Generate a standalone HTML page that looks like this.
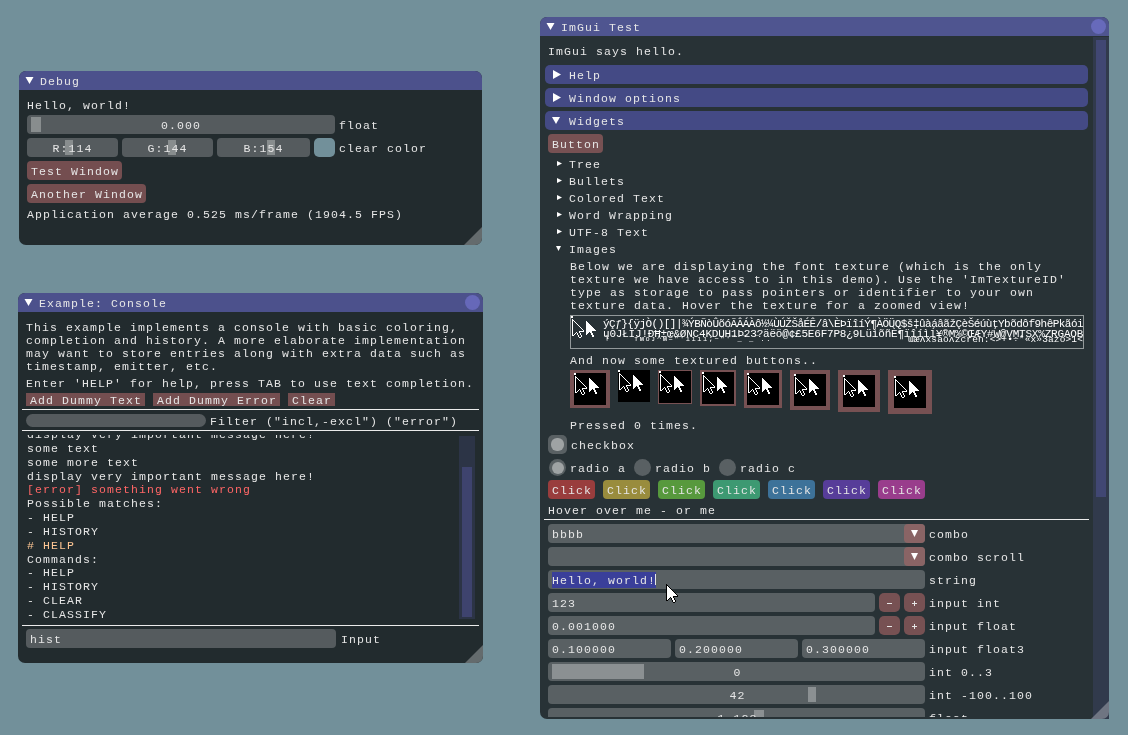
<!DOCTYPE html>
<html><head><meta charset="utf-8"><style>
html,body{margin:0;padding:0;width:1128px;height:735px;overflow:hidden;background:rgb(114,144,154)}
body div, body svg{position:absolute}
.t{font-family:"Liberation Mono",monospace;font-size:11.5px;letter-spacing:1.1px;line-height:13px;white-space:pre}
</style></head><body>
<div style="left:0;top:0;width:1128px;height:735px;will-change:transform">
<div style="left:19px;top:71px;width:463px;height:174px;background:rgb(34,43,46);border-radius:7px;overflow:hidden">
<div style="left:0;top:0;width:100%;height:19px;background:rgb(76,81,140)"></div>
</div>
<svg style="left:0;top:0" width="1128" height="735"><polygon points="25.5,77 33.5,77 29.5,84" fill="rgb(255,255,255)"/></svg>
<div class="t" style="left:40px;top:75px;color:rgb(230,230,230);">Debug</div>
<div class="t" style="left:27px;top:99px;color:rgb(230,230,230);">Hello, world!</div>
<div style="left:27px;top:115px;width:308px;height:19px;background:rgb(85,91,94);border-radius:4px;"></div>
<div style="left:31px;top:117px;width:10px;height:15px;background:rgb(136,141,142);"></div>
<div class="t" style="left:161px;top:119px;color:rgb(230,230,230);">0.000</div>
<div class="t" style="left:339px;top:119px;color:rgb(230,230,230);">float</div>
<div style="left:27px;top:138px;width:91px;height:19px;background:rgb(85,91,94);border-radius:4px;"></div>
<div style="left:65px;top:140px;width:8px;height:15px;background:rgb(136,141,142);"></div>
<div class="t" style="left:52.5px;top:142px;color:rgb(230,230,230);">R:114</div>
<div style="left:122px;top:138px;width:91px;height:19px;background:rgb(85,91,94);border-radius:4px;"></div>
<div style="left:168px;top:140px;width:8px;height:15px;background:rgb(136,141,142);"></div>
<div class="t" style="left:147.5px;top:142px;color:rgb(230,230,230);">G:144</div>
<div style="left:217px;top:138px;width:93px;height:19px;background:rgb(85,91,94);border-radius:4px;"></div>
<div style="left:267px;top:140px;width:8px;height:15px;background:rgb(136,141,142);"></div>
<div class="t" style="left:243.5px;top:142px;color:rgb(230,230,230);">B:154</div>
<div style="left:314px;top:138px;width:21px;height:19px;background:rgb(114,144,154);border-radius:5px;"></div>
<div class="t" style="left:339px;top:142px;color:rgb(230,230,230);">clear color</div>
<div style="left:27px;top:161px;width:95px;height:19px;background:rgb(116,78,80);border-radius:4px;"></div>
<div class="t" style="left:31px;top:165px;color:rgb(230,230,230);">Test Window</div>
<div style="left:27px;top:184px;width:119px;height:19px;background:rgb(116,78,80);border-radius:4px;"></div>
<div class="t" style="left:31px;top:188px;color:rgb(230,230,230);">Another Window</div>
<div class="t" style="left:27px;top:208px;color:rgb(230,230,230);">Application average 0.525 ms/frame (1904.5 FPS)</div>
<svg style="left:0;top:0" width="1128" height="735"><path d="M482 227L482 238A7 7 0 0 1 475 245L464 245Z" fill="rgb(100,107,109)"/></svg>
<div style="left:18px;top:293px;width:465px;height:370px;background:rgb(34,43,46);border-radius:7px;overflow:hidden">
<div style="left:0;top:0;width:100%;height:19px;background:rgb(76,81,140)"></div>
</div>
<svg style="left:0;top:0" width="1128" height="735"><polygon points="24.5,299 32.5,299 28.5,306" fill="rgb(255,255,255)"/></svg>
<div class="t" style="left:39px;top:297px;color:rgb(230,230,230);">Example: Console</div>
<div style="left:464.9px;top:294.9px;width:15.2px;height:15.2px;border-radius:50%;background:rgb(102,104,185)"></div>
<div class="t" style="left:26px;top:321px;color:rgb(230,230,230);">This example implements a console with basic coloring,</div>
<div class="t" style="left:26px;top:334px;color:rgb(230,230,230);">completion and history. A more elaborate implementation</div>
<div class="t" style="left:26px;top:347px;color:rgb(230,230,230);">may want to store entries along with extra data such as</div>
<div class="t" style="left:26px;top:360px;color:rgb(230,230,230);">timestamp, emitter, etc.</div>
<div class="t" style="left:26px;top:377px;color:rgb(230,230,230);">Enter &#x27;HELP&#x27; for help, press TAB to use text completion.</div>
<div style="left:26px;top:393px;width:119px;height:13px;background:rgb(116,78,80);"></div>
<div class="t" style="left:30px;top:394px;color:rgb(230,230,230);">Add Dummy Text</div>
<div style="left:153px;top:393px;width:127px;height:13px;background:rgb(116,78,80);"></div>
<div class="t" style="left:157px;top:394px;color:rgb(230,230,230);">Add Dummy Error</div>
<div style="left:288px;top:393px;width:47px;height:13px;background:rgb(116,78,80);"></div>
<div class="t" style="left:292px;top:394px;color:rgb(230,230,230);">Clear</div>
<div style="left:22px;top:409px;width:457px;height:1px;background:rgb(235,235,235);"></div>
<div style="left:26px;top:414px;width:180px;height:13px;background:rgb(85,91,94);border-radius:6.5px;"></div>
<div class="t" style="left:210px;top:415px;color:rgb(230,230,230);">Filter (&quot;incl,-excl&quot;) (&quot;error&quot;)</div>
<div style="left:22px;top:430px;width:457px;height:1px;background:rgb(235,235,235);"></div>
<div style="left:26px;top:435px;width:430px;height:186px;overflow:hidden">
<div class="t" style="left:1px;top:-6.83px;color:rgb(230,230,230)">display very important message here!</div>
<div class="t" style="left:1px;top:7px;color:rgb(230,230,230)">some text</div>
<div class="t" style="left:1px;top:20.83px;color:rgb(230,230,230)">some more text</div>
<div class="t" style="left:1px;top:34.66px;color:rgb(230,230,230)">display very important message here!</div>
<div class="t" style="left:1px;top:48.49px;color:rgb(255,102,102)">[error] something went wrong</div>
<div class="t" style="left:1px;top:62.32px;color:rgb(230,230,230)">Possible matches:</div>
<div class="t" style="left:1px;top:76.15px;color:rgb(230,230,230)">- HELP</div>
<div class="t" style="left:1px;top:89.98px;color:rgb(230,230,230)">- HISTORY</div>
<div class="t" style="left:1px;top:103.81px;color:rgb(255,199,148)"># HELP</div>
<div class="t" style="left:1px;top:117.64px;color:rgb(230,230,230)">Commands:</div>
<div class="t" style="left:1px;top:131.47px;color:rgb(230,230,230)">- HELP</div>
<div class="t" style="left:1px;top:145.3px;color:rgb(230,230,230)">- HISTORY</div>
<div class="t" style="left:1px;top:159.13px;color:rgb(230,230,230)">- CLEAR</div>
<div class="t" style="left:1px;top:172.96px;color:rgb(230,230,230)">- CLASSIFY</div>
</div>
<div style="left:459px;top:436px;width:16px;height:183px;background:rgb(44,52,70);"></div>
<div style="left:462px;top:467px;width:10px;height:150px;background:rgb(62,67,110);"></div>
<div style="left:22px;top:625px;width:457px;height:1px;background:rgb(235,235,235);"></div>
<div style="left:26px;top:629px;width:310px;height:19px;background:rgb(85,91,94);border-radius:4px;"></div>
<div class="t" style="left:30px;top:633px;color:rgb(230,230,230);">hist</div>
<div class="t" style="left:341px;top:633px;color:rgb(230,230,230);">Input</div>
<svg style="left:0;top:0" width="1128" height="735"><path d="M483 645L483 656A7 7 0 0 1 476 663L465 663Z" fill="rgb(100,107,109)"/></svg>
<div style="left:540px;top:17px;width:569px;height:702px;background:rgb(40,50,54);border-radius:7px;overflow:hidden">
<div style="left:0;top:0;width:100%;height:19px;background:rgb(79,85,144)"></div>
</div>
<svg style="left:0;top:0" width="1128" height="735"><polygon points="546.5,23 554.5,23 550.5,30" fill="rgb(255,255,255)"/></svg>
<div class="t" style="left:561px;top:21px;color:rgb(230,230,230);">ImGui Test</div>
<div style="left:1090.9px;top:18.9px;width:15.2px;height:15.2px;border-radius:50%;background:rgb(103,106,187)"></div>
<div style="left:1093px;top:37px;width:16px;height:682px;background:rgb(49,58,76);"></div>
<div style="left:1096px;top:40px;width:10px;height:457px;background:rgb(65,71,115);"></div>
<div style="left:540px;top:36px;width:553px;height:681px;overflow:hidden">
<div class="t" style="left:8px;top:9px;color:rgb(230,230,230);">ImGui says hello.</div>
<div style="left:5px;top:29px;width:543px;height:19px;background:rgb(68,74,133);border-radius:5px;"></div>
<div class="t" style="left:29px;top:33px;color:rgb(230,230,230);">Help</div>
<svg style="left:0;top:0" width="1128" height="735"><polygon points="13,34 13,43 21,38.5" fill="rgb(255,255,255)"/></svg>
<div style="left:5px;top:52px;width:543px;height:19px;background:rgb(68,74,133);border-radius:5px;"></div>
<div class="t" style="left:29px;top:56px;color:rgb(230,230,230);">Window options</div>
<svg style="left:0;top:0" width="1128" height="735"><polygon points="13,57 13,66 21,61.5" fill="rgb(255,255,255)"/></svg>
<div style="left:5px;top:75px;width:543px;height:19px;background:rgb(68,74,133);border-radius:5px;"></div>
<div class="t" style="left:29px;top:79px;color:rgb(230,230,230);">Widgets</div>
<svg style="left:0;top:0" width="1128" height="735"><polygon points="12,81 20,81 16,88" fill="rgb(255,255,255)"/></svg>
<div style="left:8px;top:98px;width:55px;height:19px;background:rgb(119,81,83);border-radius:4px;"></div>
<div class="t" style="left:12px;top:102px;color:rgb(230,230,230);">Button</div>
<div class="t" style="left:29px;top:122px;color:rgb(230,230,230);">Tree</div>
<svg style="left:0;top:0" width="1128" height="735"><polygon points="17,125 17,130 22,127.5" fill="rgb(255,255,255)"/></svg>
<div class="t" style="left:29px;top:139px;color:rgb(230,230,230);">Bullets</div>
<svg style="left:0;top:0" width="1128" height="735"><polygon points="17,142 17,147 22,144.5" fill="rgb(255,255,255)"/></svg>
<div class="t" style="left:29px;top:156px;color:rgb(230,230,230);">Colored Text</div>
<svg style="left:0;top:0" width="1128" height="735"><polygon points="17,159 17,164 22,161.5" fill="rgb(255,255,255)"/></svg>
<div class="t" style="left:29px;top:173px;color:rgb(230,230,230);">Word Wrapping</div>
<svg style="left:0;top:0" width="1128" height="735"><polygon points="17,176 17,181 22,178.5" fill="rgb(255,255,255)"/></svg>
<div class="t" style="left:29px;top:190px;color:rgb(230,230,230);">UTF-8 Text</div>
<svg style="left:0;top:0" width="1128" height="735"><polygon points="17,193 17,198 22,195.5" fill="rgb(255,255,255)"/></svg>
<div class="t" style="left:29px;top:207px;color:rgb(230,230,230);">Images</div>
<svg style="left:0;top:0" width="1128" height="735"><polygon points="16,210 21,210 18.5,215" fill="rgb(255,255,255)"/></svg>
<div class="t" style="left:30px;top:224px;color:rgb(230,230,230);">Below we are displaying the font texture (which is the only</div>
<div class="t" style="left:30px;top:237px;color:rgb(230,230,230);">texture we have access to in this demo). Use the &#x27;ImTextureID&#x27;</div>
<div class="t" style="left:30px;top:250px;color:rgb(230,230,230);">type as storage to pass pointers or identifier to your own</div>
<div class="t" style="left:30px;top:263px;color:rgb(230,230,230);">texture data. Hover the texture for a zoomed view!</div>
<div style="left:30px;top:279px;width:514px;height:34px;background:rgb(147,153,154);"></div>
<div style="left:31px;top:280px;width:512px;height:32px;background:rgb(40,50,54);"></div>
</div>
<svg style="left:0;top:0" width="1128" height="735" shape-rendering="crispEdges"><path d="M571 316h2v2h-2zM572 319h1v1h-1zM572 320h2v1h-2zM572 321h1v1h-1zM574 321h1v1h-1zM572 322h1v1h-1zM575 322h1v1h-1zM572 323h1v1h-1zM576 323h1v1h-1zM572 324h1v1h-1zM577 324h1v1h-1zM572 325h1v1h-1zM578 325h1v1h-1zM572 326h1v1h-1zM579 326h1v1h-1zM572 327h1v1h-1zM580 327h1v1h-1zM572 328h1v1h-1zM581 328h1v1h-1zM572 329h1v1h-1zM582 329h1v1h-1zM572 330h1v1h-1zM583 330h1v1h-1zM572 331h1v1h-1zM579 331h5v1h-5zM572 332h1v1h-1zM576 332h1v1h-1zM579 332h1v1h-1zM572 333h1v1h-1zM575 333h1v1h-1zM577 333h1v1h-1zM580 333h1v1h-1zM572 334h1v1h-1zM574 334h1v1h-1zM577 334h1v1h-1zM580 334h1v1h-1zM572 335h2v1h-2zM578 335h1v1h-1zM581 335h1v1h-1zM578 336h1v1h-1zM581 336h1v1h-1zM579 337h2v1h-2zM586 321h1v1h-1zM586 322h2v1h-2zM586 323h3v1h-3zM586 324h4v1h-4zM586 325h5v1h-5zM586 326h6v1h-6zM586 327h7v1h-7zM586 328h8v1h-8zM586 329h9v1h-9zM586 330h10v1h-10zM586 331h6v1h-6zM586 332h3v1h-3zM590 332h2v1h-2zM586 333h2v1h-2zM591 333h2v1h-2zM586 334h1v1h-1zM591 334h2v1h-2zM592 335h2v1h-2zM592 336h2v1h-2z" fill="#fff"/></svg>
<div style="left:603px;top:319px;font-family:'Liberation Mono',monospace;font-size:11px;letter-spacing:-0.524px;line-height:10px;white-space:pre;color:#fff">ýÇƒ}{ÿjÒ()[]|¾ÝBÑòÛõóÃÂÁÀô½¼ÙÚŽŠåÉÊ/â\ÈÞïîíÝ¶ÀÖÜQ$š‡ûàáâãžÇèŠéúùţYbõdôf9hêPkãói</div>
<div style="left:603px;top:329px;font-family:'Liberation Mono',monospace;font-size:11px;letter-spacing:-0.200px;line-height:10px;white-space:pre;color:#fff">ų0JŁIJ!ÐĦ±œ&amp;ØNC4KDUH1Þ23?äëö@¢£5E6F7P8¿9LüìõñÈ¶ïîíìĺ¥®M%©ŒÆY#W@VMTSX%ZRGAOB</div>
<div style="left:908px;top:335px;font-family:'Liberation Mono',monospace;font-size:9.5px;letter-spacing:0.133px;line-height:10px;white-space:pre;color:#fff">ɯæʌxsaoʌzcren:&lt;&gt;+•÷*«x»3azo&gt;1&lt;</div>
<div style="left:634px;top:334px;font-family:'Liberation Mono',monospace;font-size:7px;letter-spacing:1.550px;line-height:10px;white-space:pre;color:#fff">ᴛᴍᴏᴊ^ᴍ=&quot;&#x27;ıııı;~&quot;&#x27;‾_‾_‾..</div>
<div style="left:604px;top:334px;font-family:'Liberation Mono',monospace;font-size:8px;letter-spacing:3.200px;line-height:10px;white-space:pre;color:#fff">˥</div>
<div style="left:540px;top:36px;width:553px;height:681px;overflow:hidden">
<div class="t" style="left:30px;top:318px;color:rgb(230,230,230);">And now some textured buttons..</div>
<div style="left:30px;top:334px;width:40px;height:38px;background:rgb(119,81,83);"></div>
<div style="left:34px;top:337px;width:32px;height:32px;background:rgb(0,0,0);"></div>
<div style="left:78px;top:334px;width:32px;height:32px;background:rgb(0,0,0);"></div>
<div style="left:118px;top:334px;width:34px;height:34px;background:rgb(119,81,83);"></div>
<div style="left:119px;top:335px;width:32px;height:32px;background:rgb(0,0,0);"></div>
<div style="left:160px;top:334px;width:36px;height:36px;background:rgb(119,81,83);"></div>
<div style="left:162px;top:336px;width:32px;height:32px;background:rgb(0,0,0);"></div>
<div style="left:204px;top:334px;width:38px;height:38px;background:rgb(119,81,83);"></div>
<div style="left:207px;top:337px;width:32px;height:32px;background:rgb(0,0,0);"></div>
<div style="left:250px;top:334px;width:40px;height:40px;background:rgb(119,81,83);"></div>
<div style="left:254px;top:338px;width:32px;height:32px;background:rgb(0,0,0);"></div>
<div style="left:298px;top:334px;width:42px;height:42px;background:rgb(119,81,83);"></div>
<div style="left:303px;top:339px;width:32px;height:32px;background:rgb(0,0,0);"></div>
<div style="left:348px;top:334px;width:44px;height:44px;background:rgb(119,81,83);"></div>
<div style="left:354px;top:340px;width:32px;height:32px;background:rgb(0,0,0);"></div>
</div>
<svg style="left:0;top:0" width="1128" height="735" shape-rendering="crispEdges"><path d="M574 373h2v2h-2zM575 376h1v1h-1zM575 377h2v1h-2zM575 378h1v1h-1zM577 378h1v1h-1zM575 379h1v1h-1zM578 379h1v1h-1zM575 380h1v1h-1zM579 380h1v1h-1zM575 381h1v1h-1zM580 381h1v1h-1zM575 382h1v1h-1zM581 382h1v1h-1zM575 383h1v1h-1zM582 383h1v1h-1zM575 384h1v1h-1zM583 384h1v1h-1zM575 385h1v1h-1zM584 385h1v1h-1zM575 386h1v1h-1zM585 386h1v1h-1zM575 387h1v1h-1zM586 387h1v1h-1zM575 388h1v1h-1zM582 388h5v1h-5zM575 389h1v1h-1zM579 389h1v1h-1zM582 389h1v1h-1zM575 390h1v1h-1zM578 390h1v1h-1zM580 390h1v1h-1zM583 390h1v1h-1zM575 391h1v1h-1zM577 391h1v1h-1zM580 391h1v1h-1zM583 391h1v1h-1zM575 392h2v1h-2zM581 392h1v1h-1zM584 392h1v1h-1zM581 393h1v1h-1zM584 393h1v1h-1zM582 394h2v1h-2zM589 378h1v1h-1zM589 379h2v1h-2zM589 380h3v1h-3zM589 381h4v1h-4zM589 382h5v1h-5zM589 383h6v1h-6zM589 384h7v1h-7zM589 385h8v1h-8zM589 386h9v1h-9zM589 387h10v1h-10zM589 388h6v1h-6zM589 389h3v1h-3zM593 389h2v1h-2zM589 390h2v1h-2zM594 390h2v1h-2zM589 391h1v1h-1zM594 391h2v1h-2zM595 392h2v1h-2zM595 393h2v1h-2z" fill="#fff"/></svg>
<svg style="left:0;top:0" width="1128" height="735" shape-rendering="crispEdges"><path d="M618 370h2v2h-2zM619 373h1v1h-1zM619 374h2v1h-2zM619 375h1v1h-1zM621 375h1v1h-1zM619 376h1v1h-1zM622 376h1v1h-1zM619 377h1v1h-1zM623 377h1v1h-1zM619 378h1v1h-1zM624 378h1v1h-1zM619 379h1v1h-1zM625 379h1v1h-1zM619 380h1v1h-1zM626 380h1v1h-1zM619 381h1v1h-1zM627 381h1v1h-1zM619 382h1v1h-1zM628 382h1v1h-1zM619 383h1v1h-1zM629 383h1v1h-1zM619 384h1v1h-1zM630 384h1v1h-1zM619 385h1v1h-1zM626 385h5v1h-5zM619 386h1v1h-1zM623 386h1v1h-1zM626 386h1v1h-1zM619 387h1v1h-1zM622 387h1v1h-1zM624 387h1v1h-1zM627 387h1v1h-1zM619 388h1v1h-1zM621 388h1v1h-1zM624 388h1v1h-1zM627 388h1v1h-1zM619 389h2v1h-2zM625 389h1v1h-1zM628 389h1v1h-1zM625 390h1v1h-1zM628 390h1v1h-1zM626 391h2v1h-2zM633 375h1v1h-1zM633 376h2v1h-2zM633 377h3v1h-3zM633 378h4v1h-4zM633 379h5v1h-5zM633 380h6v1h-6zM633 381h7v1h-7zM633 382h8v1h-8zM633 383h9v1h-9zM633 384h10v1h-10zM633 385h6v1h-6zM633 386h3v1h-3zM637 386h2v1h-2zM633 387h2v1h-2zM638 387h2v1h-2zM633 388h1v1h-1zM638 388h2v1h-2zM639 389h2v1h-2zM639 390h2v1h-2z" fill="#fff"/></svg>
<svg style="left:0;top:0" width="1128" height="735" shape-rendering="crispEdges"><path d="M659 371h2v2h-2zM660 374h1v1h-1zM660 375h2v1h-2zM660 376h1v1h-1zM662 376h1v1h-1zM660 377h1v1h-1zM663 377h1v1h-1zM660 378h1v1h-1zM664 378h1v1h-1zM660 379h1v1h-1zM665 379h1v1h-1zM660 380h1v1h-1zM666 380h1v1h-1zM660 381h1v1h-1zM667 381h1v1h-1zM660 382h1v1h-1zM668 382h1v1h-1zM660 383h1v1h-1zM669 383h1v1h-1zM660 384h1v1h-1zM670 384h1v1h-1zM660 385h1v1h-1zM671 385h1v1h-1zM660 386h1v1h-1zM667 386h5v1h-5zM660 387h1v1h-1zM664 387h1v1h-1zM667 387h1v1h-1zM660 388h1v1h-1zM663 388h1v1h-1zM665 388h1v1h-1zM668 388h1v1h-1zM660 389h1v1h-1zM662 389h1v1h-1zM665 389h1v1h-1zM668 389h1v1h-1zM660 390h2v1h-2zM666 390h1v1h-1zM669 390h1v1h-1zM666 391h1v1h-1zM669 391h1v1h-1zM667 392h2v1h-2zM674 376h1v1h-1zM674 377h2v1h-2zM674 378h3v1h-3zM674 379h4v1h-4zM674 380h5v1h-5zM674 381h6v1h-6zM674 382h7v1h-7zM674 383h8v1h-8zM674 384h9v1h-9zM674 385h10v1h-10zM674 386h6v1h-6zM674 387h3v1h-3zM678 387h2v1h-2zM674 388h2v1h-2zM679 388h2v1h-2zM674 389h1v1h-1zM679 389h2v1h-2zM680 390h2v1h-2zM680 391h2v1h-2z" fill="#fff"/></svg>
<svg style="left:0;top:0" width="1128" height="735" shape-rendering="crispEdges"><path d="M702 372h2v2h-2zM703 375h1v1h-1zM703 376h2v1h-2zM703 377h1v1h-1zM705 377h1v1h-1zM703 378h1v1h-1zM706 378h1v1h-1zM703 379h1v1h-1zM707 379h1v1h-1zM703 380h1v1h-1zM708 380h1v1h-1zM703 381h1v1h-1zM709 381h1v1h-1zM703 382h1v1h-1zM710 382h1v1h-1zM703 383h1v1h-1zM711 383h1v1h-1zM703 384h1v1h-1zM712 384h1v1h-1zM703 385h1v1h-1zM713 385h1v1h-1zM703 386h1v1h-1zM714 386h1v1h-1zM703 387h1v1h-1zM710 387h5v1h-5zM703 388h1v1h-1zM707 388h1v1h-1zM710 388h1v1h-1zM703 389h1v1h-1zM706 389h1v1h-1zM708 389h1v1h-1zM711 389h1v1h-1zM703 390h1v1h-1zM705 390h1v1h-1zM708 390h1v1h-1zM711 390h1v1h-1zM703 391h2v1h-2zM709 391h1v1h-1zM712 391h1v1h-1zM709 392h1v1h-1zM712 392h1v1h-1zM710 393h2v1h-2zM717 377h1v1h-1zM717 378h2v1h-2zM717 379h3v1h-3zM717 380h4v1h-4zM717 381h5v1h-5zM717 382h6v1h-6zM717 383h7v1h-7zM717 384h8v1h-8zM717 385h9v1h-9zM717 386h10v1h-10zM717 387h6v1h-6zM717 388h3v1h-3zM721 388h2v1h-2zM717 389h2v1h-2zM722 389h2v1h-2zM717 390h1v1h-1zM722 390h2v1h-2zM723 391h2v1h-2zM723 392h2v1h-2z" fill="#fff"/></svg>
<svg style="left:0;top:0" width="1128" height="735" shape-rendering="crispEdges"><path d="M747 373h2v2h-2zM748 376h1v1h-1zM748 377h2v1h-2zM748 378h1v1h-1zM750 378h1v1h-1zM748 379h1v1h-1zM751 379h1v1h-1zM748 380h1v1h-1zM752 380h1v1h-1zM748 381h1v1h-1zM753 381h1v1h-1zM748 382h1v1h-1zM754 382h1v1h-1zM748 383h1v1h-1zM755 383h1v1h-1zM748 384h1v1h-1zM756 384h1v1h-1zM748 385h1v1h-1zM757 385h1v1h-1zM748 386h1v1h-1zM758 386h1v1h-1zM748 387h1v1h-1zM759 387h1v1h-1zM748 388h1v1h-1zM755 388h5v1h-5zM748 389h1v1h-1zM752 389h1v1h-1zM755 389h1v1h-1zM748 390h1v1h-1zM751 390h1v1h-1zM753 390h1v1h-1zM756 390h1v1h-1zM748 391h1v1h-1zM750 391h1v1h-1zM753 391h1v1h-1zM756 391h1v1h-1zM748 392h2v1h-2zM754 392h1v1h-1zM757 392h1v1h-1zM754 393h1v1h-1zM757 393h1v1h-1zM755 394h2v1h-2zM762 378h1v1h-1zM762 379h2v1h-2zM762 380h3v1h-3zM762 381h4v1h-4zM762 382h5v1h-5zM762 383h6v1h-6zM762 384h7v1h-7zM762 385h8v1h-8zM762 386h9v1h-9zM762 387h10v1h-10zM762 388h6v1h-6zM762 389h3v1h-3zM766 389h2v1h-2zM762 390h2v1h-2zM767 390h2v1h-2zM762 391h1v1h-1zM767 391h2v1h-2zM768 392h2v1h-2zM768 393h2v1h-2z" fill="#fff"/></svg>
<svg style="left:0;top:0" width="1128" height="735" shape-rendering="crispEdges"><path d="M794 374h2v2h-2zM795 377h1v1h-1zM795 378h2v1h-2zM795 379h1v1h-1zM797 379h1v1h-1zM795 380h1v1h-1zM798 380h1v1h-1zM795 381h1v1h-1zM799 381h1v1h-1zM795 382h1v1h-1zM800 382h1v1h-1zM795 383h1v1h-1zM801 383h1v1h-1zM795 384h1v1h-1zM802 384h1v1h-1zM795 385h1v1h-1zM803 385h1v1h-1zM795 386h1v1h-1zM804 386h1v1h-1zM795 387h1v1h-1zM805 387h1v1h-1zM795 388h1v1h-1zM806 388h1v1h-1zM795 389h1v1h-1zM802 389h5v1h-5zM795 390h1v1h-1zM799 390h1v1h-1zM802 390h1v1h-1zM795 391h1v1h-1zM798 391h1v1h-1zM800 391h1v1h-1zM803 391h1v1h-1zM795 392h1v1h-1zM797 392h1v1h-1zM800 392h1v1h-1zM803 392h1v1h-1zM795 393h2v1h-2zM801 393h1v1h-1zM804 393h1v1h-1zM801 394h1v1h-1zM804 394h1v1h-1zM802 395h2v1h-2zM809 379h1v1h-1zM809 380h2v1h-2zM809 381h3v1h-3zM809 382h4v1h-4zM809 383h5v1h-5zM809 384h6v1h-6zM809 385h7v1h-7zM809 386h8v1h-8zM809 387h9v1h-9zM809 388h10v1h-10zM809 389h6v1h-6zM809 390h3v1h-3zM813 390h2v1h-2zM809 391h2v1h-2zM814 391h2v1h-2zM809 392h1v1h-1zM814 392h2v1h-2zM815 393h2v1h-2zM815 394h2v1h-2z" fill="#fff"/></svg>
<svg style="left:0;top:0" width="1128" height="735" shape-rendering="crispEdges"><path d="M843 375h2v2h-2zM844 378h1v1h-1zM844 379h2v1h-2zM844 380h1v1h-1zM846 380h1v1h-1zM844 381h1v1h-1zM847 381h1v1h-1zM844 382h1v1h-1zM848 382h1v1h-1zM844 383h1v1h-1zM849 383h1v1h-1zM844 384h1v1h-1zM850 384h1v1h-1zM844 385h1v1h-1zM851 385h1v1h-1zM844 386h1v1h-1zM852 386h1v1h-1zM844 387h1v1h-1zM853 387h1v1h-1zM844 388h1v1h-1zM854 388h1v1h-1zM844 389h1v1h-1zM855 389h1v1h-1zM844 390h1v1h-1zM851 390h5v1h-5zM844 391h1v1h-1zM848 391h1v1h-1zM851 391h1v1h-1zM844 392h1v1h-1zM847 392h1v1h-1zM849 392h1v1h-1zM852 392h1v1h-1zM844 393h1v1h-1zM846 393h1v1h-1zM849 393h1v1h-1zM852 393h1v1h-1zM844 394h2v1h-2zM850 394h1v1h-1zM853 394h1v1h-1zM850 395h1v1h-1zM853 395h1v1h-1zM851 396h2v1h-2zM858 380h1v1h-1zM858 381h2v1h-2zM858 382h3v1h-3zM858 383h4v1h-4zM858 384h5v1h-5zM858 385h6v1h-6zM858 386h7v1h-7zM858 387h8v1h-8zM858 388h9v1h-9zM858 389h10v1h-10zM858 390h6v1h-6zM858 391h3v1h-3zM862 391h2v1h-2zM858 392h2v1h-2zM863 392h2v1h-2zM858 393h1v1h-1zM863 393h2v1h-2zM864 394h2v1h-2zM864 395h2v1h-2z" fill="#fff"/></svg>
<svg style="left:0;top:0" width="1128" height="735" shape-rendering="crispEdges"><path d="M894 376h2v2h-2zM895 379h1v1h-1zM895 380h2v1h-2zM895 381h1v1h-1zM897 381h1v1h-1zM895 382h1v1h-1zM898 382h1v1h-1zM895 383h1v1h-1zM899 383h1v1h-1zM895 384h1v1h-1zM900 384h1v1h-1zM895 385h1v1h-1zM901 385h1v1h-1zM895 386h1v1h-1zM902 386h1v1h-1zM895 387h1v1h-1zM903 387h1v1h-1zM895 388h1v1h-1zM904 388h1v1h-1zM895 389h1v1h-1zM905 389h1v1h-1zM895 390h1v1h-1zM906 390h1v1h-1zM895 391h1v1h-1zM902 391h5v1h-5zM895 392h1v1h-1zM899 392h1v1h-1zM902 392h1v1h-1zM895 393h1v1h-1zM898 393h1v1h-1zM900 393h1v1h-1zM903 393h1v1h-1zM895 394h1v1h-1zM897 394h1v1h-1zM900 394h1v1h-1zM903 394h1v1h-1zM895 395h2v1h-2zM901 395h1v1h-1zM904 395h1v1h-1zM901 396h1v1h-1zM904 396h1v1h-1zM902 397h2v1h-2zM909 381h1v1h-1zM909 382h2v1h-2zM909 383h3v1h-3zM909 384h4v1h-4zM909 385h5v1h-5zM909 386h6v1h-6zM909 387h7v1h-7zM909 388h8v1h-8zM909 389h9v1h-9zM909 390h10v1h-10zM909 391h6v1h-6zM909 392h3v1h-3zM913 392h2v1h-2zM909 393h2v1h-2zM914 393h2v1h-2zM909 394h1v1h-1zM914 394h2v1h-2zM915 395h2v1h-2zM915 396h2v1h-2z" fill="#fff"/></svg>
<div style="left:540px;top:36px;width:553px;height:681px;overflow:hidden">
<div class="t" style="left:30px;top:383px;color:rgb(230,230,230);">Pressed 0 times.</div>
<div style="left:8px;top:399px;width:19px;height:19px;background:rgb(89,96,99);border-radius:5px;"></div>
<div style="left:11px;top:402px;width:13px;height:13px;background:rgb(159,163,164);border-radius:6px;"></div>
<div class="t" style="left:31px;top:403px;color:rgb(230,230,230);">checkbox</div>
<div style="left:9px;top:423px;width:17px;height:17px;border-radius:50%;background:rgb(89,96,99)"></div>
<div style="left:11.5px;top:425.5px;width:12px;height:12px;border-radius:50%;background:rgb(159,163,164)"></div>
<div class="t" style="left:30px;top:426px;color:rgb(230,230,230);">radio a</div>
<div style="left:94px;top:423px;width:17px;height:17px;border-radius:50%;background:rgb(89,96,99)"></div>
<div class="t" style="left:115px;top:426px;color:rgb(230,230,230);">radio b</div>
<div style="left:179px;top:423px;width:17px;height:17px;border-radius:50%;background:rgb(89,96,99)"></div>
<div class="t" style="left:200px;top:426px;color:rgb(230,230,230);">radio c</div>
<div style="left:8px;top:444px;width:47px;height:19px;background:rgb(153,61,61);border-radius:4px;"></div>
<div class="t" style="left:12px;top:448px;color:rgb(230,230,230);">Click</div>
<div style="left:63px;top:444px;width:47px;height:19px;background:rgb(153,140,61);border-radius:4px;"></div>
<div class="t" style="left:67px;top:448px;color:rgb(230,230,230);">Click</div>
<div style="left:118px;top:444px;width:47px;height:19px;background:rgb(87,153,61);border-radius:4px;"></div>
<div class="t" style="left:122px;top:448px;color:rgb(230,230,230);">Click</div>
<div style="left:173px;top:444px;width:47px;height:19px;background:rgb(61,153,114);border-radius:4px;"></div>
<div class="t" style="left:177px;top:448px;color:rgb(230,230,230);">Click</div>
<div style="left:228px;top:444px;width:47px;height:19px;background:rgb(61,114,153);border-radius:4px;"></div>
<div class="t" style="left:232px;top:448px;color:rgb(230,230,230);">Click</div>
<div style="left:283px;top:444px;width:47px;height:19px;background:rgb(87,61,153);border-radius:4px;"></div>
<div class="t" style="left:287px;top:448px;color:rgb(230,230,230);">Click</div>
<div style="left:338px;top:444px;width:47px;height:19px;background:rgb(153,61,140);border-radius:4px;"></div>
<div class="t" style="left:342px;top:448px;color:rgb(230,230,230);">Click</div>
<div class="t" style="left:8px;top:468px;color:rgb(230,230,230);">Hover over me - or me</div>
<div style="left:4px;top:483px;width:545px;height:1px;background:rgb(235,235,235);"></div>
<div style="left:8px;top:488px;width:377px;height:19px;background:rgb(89,96,99);border-radius:4px;"></div>
<div style="left:364px;top:488px;width:21px;height:19px;background:rgb(138,100,101);border-radius:4px;"></div>
<svg style="left:0;top:0" width="1128" height="735"><polygon points="371,494 378,494 374.5,501" fill="rgb(255,255,255)"/></svg>
<div class="t" style="left:12px;top:492px;color:rgb(230,230,230);">bbbb</div>
<div class="t" style="left:389px;top:492px;color:rgb(230,230,230);">combo</div>
<div style="left:8px;top:511px;width:377px;height:19px;background:rgb(89,96,99);border-radius:4px;"></div>
<div style="left:364px;top:511px;width:21px;height:19px;background:rgb(138,100,101);border-radius:4px;"></div>
<svg style="left:0;top:0" width="1128" height="735"><polygon points="371,517 378,517 374.5,524" fill="rgb(255,255,255)"/></svg>
<div class="t" style="left:389px;top:515px;color:rgb(230,230,230);">combo scroll</div>
<div style="left:8px;top:534px;width:377px;height:19px;background:rgb(89,96,99);border-radius:4px;"></div>
<div style="left:12px;top:536px;width:104px;height:16px;background:rgb(58,63,154);"></div>
<div class="t" style="left:12px;top:538px;color:rgb(230,230,230);">Hello, world!</div>
<div style="left:115px;top:538px;width:1px;height:11px;background:rgb(230,230,230);"></div>
<div class="t" style="left:389px;top:538px;color:rgb(230,230,230);">string</div>
<div style="left:8px;top:557px;width:327px;height:19px;background:rgb(89,96,99);border-radius:4px;"></div>
<div style="left:339px;top:557px;width:21px;height:19px;background:rgb(119,81,83);border-radius:5px;"></div>
<div style="left:364px;top:557px;width:21px;height:19px;background:rgb(119,81,83);border-radius:5px;"></div>
<div style="left:347px;top:567px;width:5px;height:1px;background:rgb(230,230,230);"></div>
<div style="left:372px;top:567px;width:5px;height:1px;background:rgb(230,230,230);"></div>
<div style="left:374px;top:565px;width:1px;height:5px;background:rgb(230,230,230);"></div>
<div class="t" style="left:12px;top:561px;color:rgb(230,230,230);">123</div>
<div class="t" style="left:389px;top:561px;color:rgb(230,230,230);">input int</div>
<div style="left:8px;top:580px;width:327px;height:19px;background:rgb(89,96,99);border-radius:4px;"></div>
<div style="left:339px;top:580px;width:21px;height:19px;background:rgb(119,81,83);border-radius:5px;"></div>
<div style="left:364px;top:580px;width:21px;height:19px;background:rgb(119,81,83);border-radius:5px;"></div>
<div style="left:347px;top:590px;width:5px;height:1px;background:rgb(230,230,230);"></div>
<div style="left:372px;top:590px;width:5px;height:1px;background:rgb(230,230,230);"></div>
<div style="left:374px;top:588px;width:1px;height:5px;background:rgb(230,230,230);"></div>
<div class="t" style="left:12px;top:584px;color:rgb(230,230,230);">0.001000</div>
<div class="t" style="left:389px;top:584px;color:rgb(230,230,230);">input float</div>
<div style="left:8px;top:603px;width:123px;height:19px;background:rgb(89,96,99);border-radius:4px;"></div>
<div class="t" style="left:12px;top:607px;color:rgb(230,230,230);">0.100000</div>
<div style="left:135px;top:603px;width:123px;height:19px;background:rgb(89,96,99);border-radius:4px;"></div>
<div class="t" style="left:139px;top:607px;color:rgb(230,230,230);">0.200000</div>
<div style="left:262px;top:603px;width:123px;height:19px;background:rgb(89,96,99);border-radius:4px;"></div>
<div class="t" style="left:266px;top:607px;color:rgb(230,230,230);">0.300000</div>
<div class="t" style="left:389px;top:607px;color:rgb(230,230,230);">input float3</div>
<div style="left:8px;top:626px;width:377px;height:19px;background:rgb(89,96,99);border-radius:4px;"></div>
<div style="left:12px;top:628px;width:92px;height:15px;background:rgb(139,144,146);"></div>
<div class="t" style="left:193.5px;top:630px;color:rgb(230,230,230);">0</div>
<div class="t" style="left:389px;top:630px;color:rgb(230,230,230);">int 0..3</div>
<div style="left:8px;top:649px;width:377px;height:19px;background:rgb(89,96,99);border-radius:4px;"></div>
<div style="left:268px;top:651px;width:8px;height:15px;background:rgb(139,144,146);"></div>
<div class="t" style="left:189.5px;top:653px;color:rgb(230,230,230);">42</div>
<div class="t" style="left:389px;top:653px;color:rgb(230,230,230);">int -100..100</div>
<div style="left:8px;top:672px;width:377px;height:19px;background:rgb(89,96,99);border-radius:4px;"></div>
<div style="left:214px;top:674px;width:10px;height:15px;background:rgb(139,144,146);"></div>
<div class="t" style="left:177.5px;top:676px;color:rgb(230,230,230);">1.123</div>
<div class="t" style="left:389px;top:676px;color:rgb(230,230,230);">float</div>
</div>
<svg style="left:0;top:0" width="1128" height="735" shape-rendering="crispEdges"><path d="M666 584h1v1h-1zM666 585h2v1h-2zM666 586h1v1h-1zM668 586h1v1h-1zM666 587h1v1h-1zM669 587h1v1h-1zM666 588h1v1h-1zM670 588h1v1h-1zM666 589h1v1h-1zM671 589h1v1h-1zM666 590h1v1h-1zM672 590h1v1h-1zM666 591h1v1h-1zM673 591h1v1h-1zM666 592h1v1h-1zM674 592h1v1h-1zM666 593h1v1h-1zM675 593h1v1h-1zM666 594h1v1h-1zM676 594h1v1h-1zM666 595h1v1h-1zM677 595h1v1h-1zM666 596h1v1h-1zM673 596h5v1h-5zM666 597h1v1h-1zM670 597h1v1h-1zM673 597h1v1h-1zM666 598h1v1h-1zM669 598h1v1h-1zM671 598h1v1h-1zM674 598h1v1h-1zM666 599h1v1h-1zM668 599h1v1h-1zM671 599h1v1h-1zM674 599h1v1h-1zM666 600h2v1h-2zM672 600h1v1h-1zM675 600h1v1h-1zM672 601h1v1h-1zM675 601h1v1h-1zM673 602h2v1h-2z" fill="#000"/><path d="M667 586h1v1h-1zM667 587h2v1h-2zM667 588h3v1h-3zM667 589h4v1h-4zM667 590h5v1h-5zM667 591h6v1h-6zM667 592h7v1h-7zM667 593h8v1h-8zM667 594h9v1h-9zM667 595h10v1h-10zM667 596h6v1h-6zM667 597h3v1h-3zM671 597h2v1h-2zM667 598h2v1h-2zM672 598h2v1h-2zM667 599h1v1h-1zM672 599h2v1h-2zM673 600h2v1h-2zM673 601h2v1h-2z" fill="#fff"/></svg>
<svg style="left:0;top:0" width="1128" height="735"><path d="M1109 701L1109 712A7 7 0 0 1 1102 719L1091 719Z" fill="rgb(111,117,130)"/></svg>
</div>
</body></html>
